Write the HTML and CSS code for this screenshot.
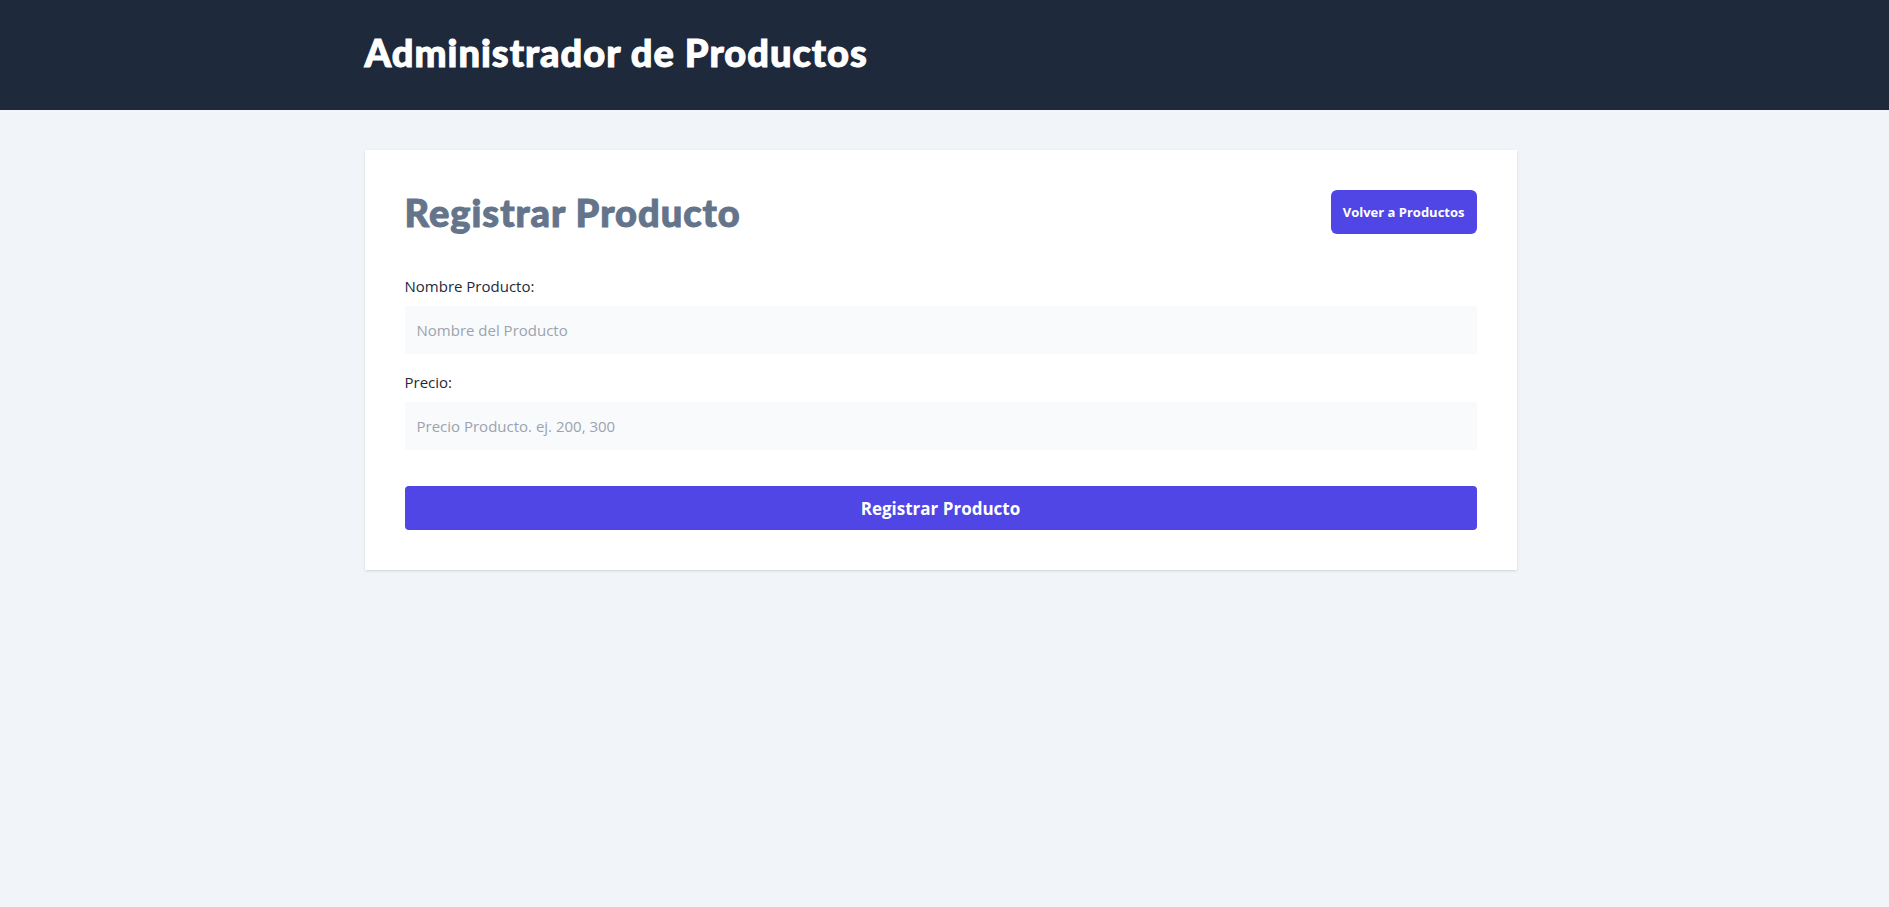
FILE: index.html
```html
<!DOCTYPE html>
<html lang="es">
<head>
<meta charset="utf-8">
<title>Administrador de Productos</title>
<link rel="stylesheet" href="styles.css">
</head>
<body>
<header class="topbar">
  <div class="container">
    <h1 class="app-title">Administrador de Productos</h1>
  </div>
</header>
<main class="container">
  <section class="card">
    <div class="card-head">
      <h2 class="page-title">Registrar Producto</h2>
      <a class="btn-back" href="#">Volver a Productos</a>
    </div>
    <form class="form">
      <div class="field">
        <label class="label" for="nombre">Nombre Producto:</label>
        <input class="input" id="nombre" type="text" placeholder="Nombre del Producto">
      </div>
      <div class="field field-next">
        <label class="label" for="precio">Precio:</label>
        <input class="input" id="precio" type="number" placeholder="Precio Producto. ej. 200, 300">
      </div>
      <button class="btn-submit" type="submit">Registrar Producto</button>
    </form>
  </section>
</main>
</body>
</html>
```
FILE: styles.css
```css
* { box-sizing: border-box; }
html, body { margin: 0; padding: 0; }
body {
  background: #f1f5f9;
  font-family: "Open Sans", "Noto Sans", Arial, sans-serif;
  color: #1e293b;
  min-height: 907px;
}
.container {
  max-width: 1152px;
  margin-left: calc(50% - 580px);
  margin-right: auto;
}
.topbar {
  background: #1e293b;
  height: 110px;
  padding-bottom: 6px;
  display: flex;
  align-items: center;
}
.topbar .container { width: 100%; }
.app-title {
  margin: 0;
  font-family: Lato, "Open Sans", sans-serif;
  font-weight: 900;
  font-size: 38px;
  line-height: 40px;
  letter-spacing: 1px;
  -webkit-text-stroke: 1px #ffffff;
  color: #ffffff;
}
.card {
  margin-top: 40px;
  background: #ffffff;
  padding: 40px;
  box-shadow: 0 1px 3px rgba(0,0,0,0.1), 0 1px 2px -1px rgba(0,0,0,0.1);
}
.card-head {
  display: flex;
  justify-content: space-between;
  align-items: center;
  height: 44px;
  margin-bottom: 42px;
}
.page-title {
  margin: 0;
  font-family: Lato, "Open Sans", sans-serif;
  font-weight: 900;
  font-size: 38px;
  line-height: 40px;
  letter-spacing: 1px;
  -webkit-text-stroke: 1px #64748b;
  color: #64748b;
}
.btn-back {
  display: inline-flex;
  align-items: center;
  height: 44px;
  padding: 0 12px;
  background: #4f46e5;
  color: #ffffff;
  border-radius: 6px;
  font-size: 13px;
  font-weight: 700;
  text-decoration: none;
}
.form { display: flex; flex-direction: column; }
.field { display: flex; flex-direction: column; }
.field-next { margin-top: 18px; }
.label {
  font-size: 15px;
  line-height: 20px;
  margin-bottom: 10px;
  color: #1e293b;
}
.input {
  height: 48px;
  border: none;
  background: #f8fafc;
  padding: 0 12px;
  font-family: inherit;
  font-size: 15px;
  color: #1e293b;
  outline: none;
  -moz-appearance: textfield;
}
.input::-webkit-outer-spin-button,
.input::-webkit-inner-spin-button { -webkit-appearance: none; margin: 0; }
.input::placeholder { color: #9ca3af; }
.btn-submit {
  margin-top: 36px;
  height: 44px;
  border: none;
  border-radius: 4px;
  background: #4f46e5;
  color: #ffffff;
  font-family: inherit;
  font-size: 17px;
  font-weight: 700;
  cursor: pointer;
}
```
